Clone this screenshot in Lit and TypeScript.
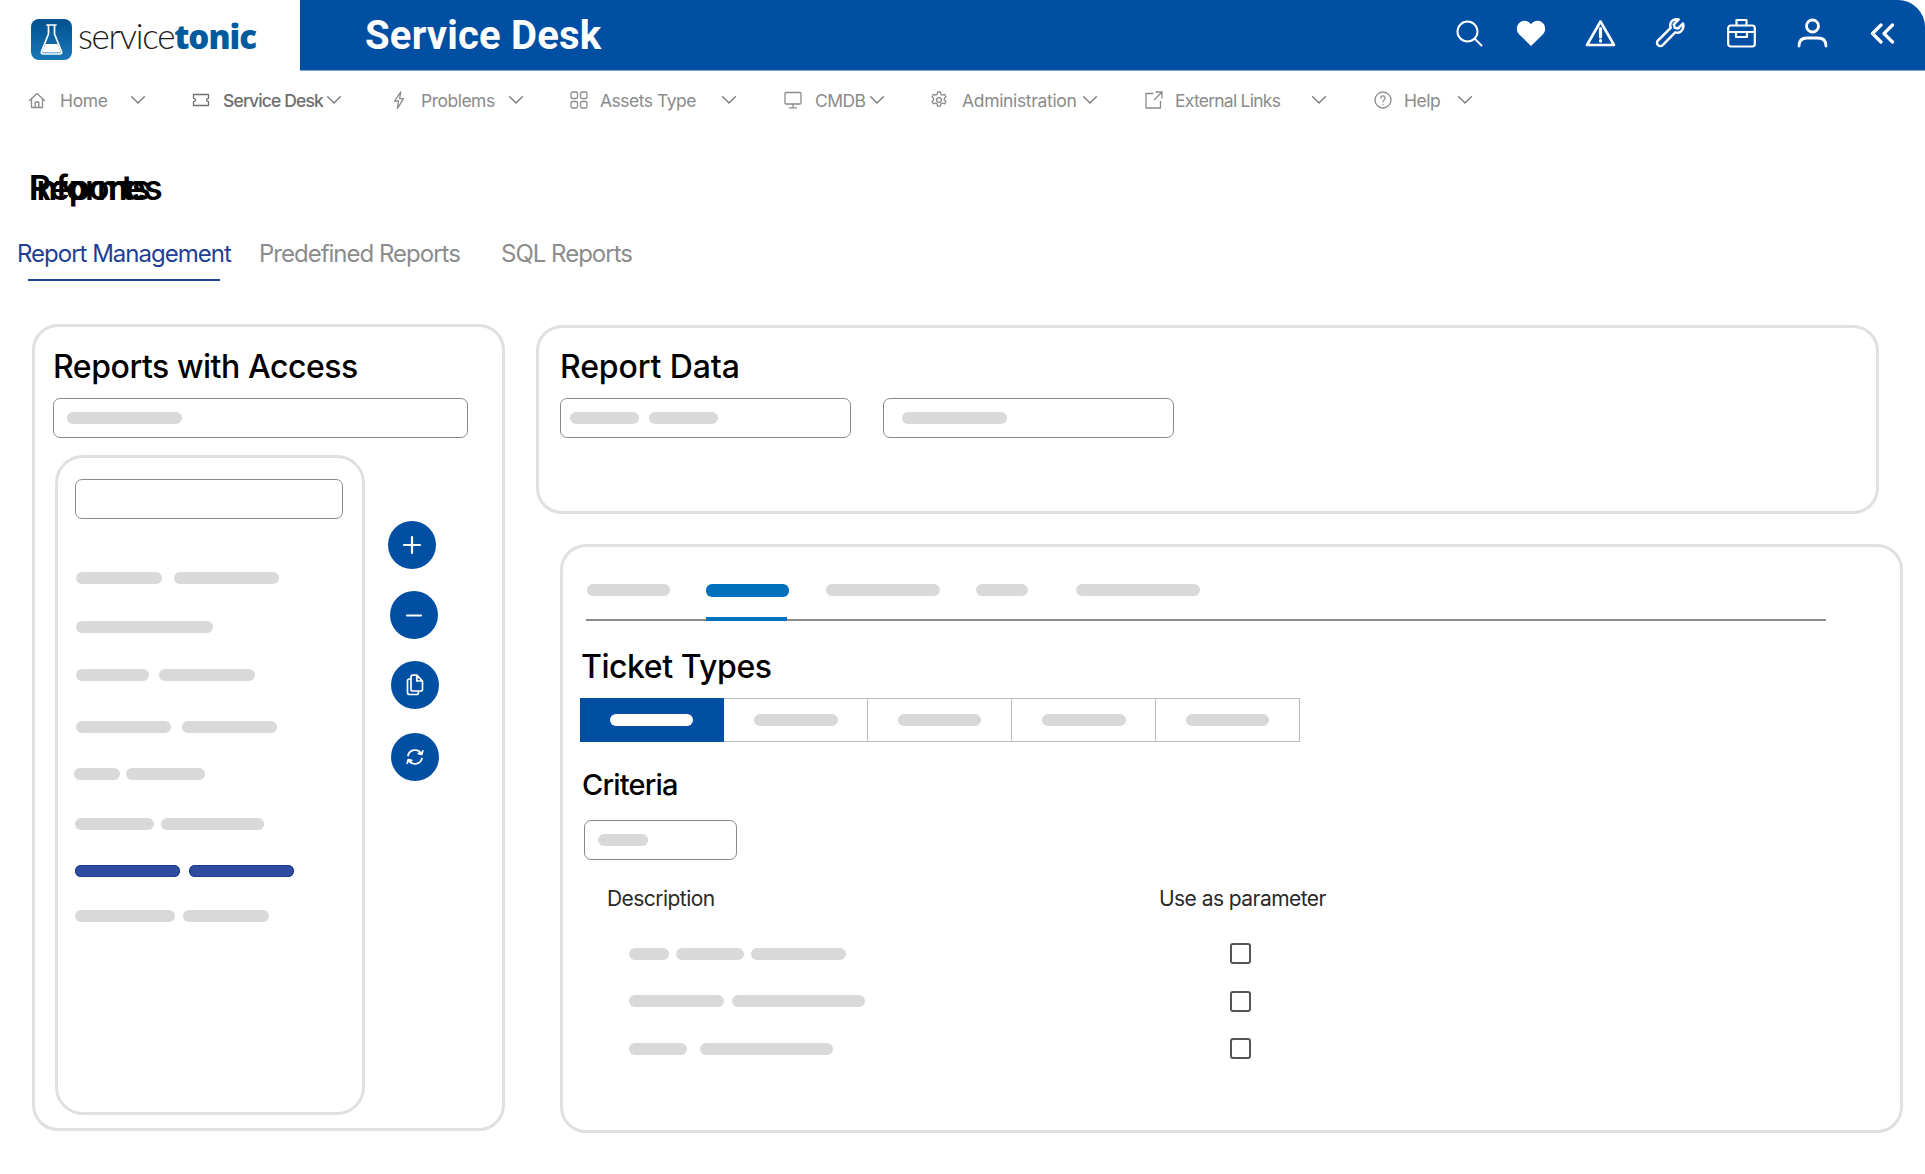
import { LitElement, html, css, svg } from "lit";
import { customElement } from "lit/decorators.js";

const ic = (w: number, h: number, vb: string, body: unknown, cls = "") =>
  html`<svg class=${cls} width=${w} height=${h} viewBox=${vb} fill="none" stroke="currentColor" stroke-linecap="round" stroke-linejoin="round">${body}</svg>`;

// left = space before the item, iw = icon width, gap = icon to label, box = label column width, ls = tracking of that label
const NAV = [
  { label: "Home", left: 28, gap: 14, box: 71, iw: 18, ls: -0.35, icon: svg`<path d="M1.500 9.500 9 2.500l7.500 7M3.500 8v8.500h11V8M7.200 16.500v-5.500h3.600v5.500"/>` },
  { label: "Service Desk", left: 47, gap: 13, box: 104, iw: 18, ls: -0.85, strong: true, icon: svg`<path d="M1.500 3.500h15v3.800c-1.300.3-2 .9-2 1.700s.7 1.400 2 1.700v3.800h-15v-3.800c1.300-.3 2-.9 2-1.700s-.7-1.400-2-1.700z"/>` },
  { label: "Problems", left: 52, gap: 16, box: 88, iw: 12, ls: -0.5, icon: svg`<path d="M7.800.8 1.500 10h4L4.500 17.500 10.500 7.600H6.600z"/>` },
  { label: "Assets Type", left: 47, gap: 12, box: 122, iw: 18, ls: -0.5, icon: svg`<rect x="1" y="1" width="6.500" height="6.500" rx="1.500"/><rect x="10.500" y="1" width="6.500" height="6.500" rx="1.500"/><rect x="1" y="10.500" width="6.500" height="6.500" rx="1.500"/><rect x="10.500" y="10.500" width="6.500" height="6.500" rx="1.500"/>` },
  { label: "CMDB", left: 48, gap: 13, box: 55, iw: 18, ls: -0.6, icon: svg`<rect x="1" y="1.500" width="16" height="11.500" rx="1"/><path d="M9 13v3.500M5.500 16.800h7"/>` },
  { label: "Administration", left: 46, gap: 14, box: 121, iw: 18, ls: -0.33, icon: svg`<circle cx="9" cy="9" r="2.400"/><path d="m7.600 1 2.800 0 .5 2.400 1.500.8 2.200-.9 1.400 2.500-1.700 1.500v1.600l1.700 1.500-1.400 2.500-2.200-.9-1.500.8-.5 2.400H7.600l-.5-2.400-1.500-.8-2.200.9-1.400-2.500 1.700-1.500V7.300L2 5.800l1.400-2.500 2.200.9 1.500-.8z"/>` },
  { label: "External Links", left: 47, gap: 12, box: 137, iw: 19, ls: -0.75, icon: svg`<path d="M9 2.500H2v14.500h14.500V10.500M12 1h6v6M18 1l-7.500 7.500"/>` },
  { label: "Help", left: 48, gap: 12, box: 54, iw: 18, ls: -0.5, icon: svg`<circle cx="9" cy="9" r="8"/><path d="M6.800 7a2.200 2.200 0 1 1 3.300 2c-.8.500-1.100.9-1.100 1.800"/><path d="M9 13.400v.1"/>` },
];

const LIST: { top: number; x: number; bars: number[]; gap: number; active?: boolean }[] = [
  { top: 53, x: 1, bars: [86, 105], gap: 12 },
  { top: 37, x: 1, bars: [137], gap: 0 },
  { top: 36, x: 1, bars: [73, 96], gap: 10 },
  { top: 40, x: 1, bars: [95, 95], gap: 11 },
  { top: 35, x: -1, bars: [46, 79], gap: 6 },
  { top: 38, x: 0, bars: [79, 103], gap: 7 },
  { top: 35, x: 0, bars: [105, 105], gap: 9, active: true },
  { top: 33, x: 0, bars: [100, 86], gap: 8 },
];

const ROWS: { bars: number[]; gap: number }[] = [
  { bars: [40, 68, 95], gap: 7 },
  { bars: [95, 133], gap: 8 },
  { bars: [58, 133], gap: 13 },
];

const TABS = [
  { w: 83, gap: 36 },
  { w: 83, gap: 37, active: true },
  { w: 114, gap: 36 },
  { w: 52, gap: 48 },
  { w: 124, gap: 0 },
];

const SEGS = [83, 84, 83, 84, 83];

const BTNS = [
  { top: 66, x: 0, icon: ic(20, 20, "0 0 20 20", svg`<path d="M10 2v16M2 10h16" stroke-width="2.200"/>`) },
  { top: 22, x: 2, icon: ic(20, 20, "0 0 20 20", svg`<path d="M3 10.500h14" stroke-width="2.200"/>`) },
  { top: 22, x: 3, icon: ic(18, 22, "0 0 18 22", svg`<path d="M5 5H3.500C2.400 5 1.500 5.900 1.500 7v11.500c0 1.100.9 2 2 2h7c1.100 0 2-.9 2-2V17M5 15.500V3c0-1 .8-1.800 1.800-1.800h4L16.500 7v8.500c0 1-.8 1.500-1.800 1.500H6.800C5.800 17 5 16.500 5 15.500zM10.800 1.200V7h5.700" stroke-width="1.700"/>`) },
  { top: 24, x: 3, icon: ic(20, 20, "0 0 20 20", svg`<path d="M3 8.500A7.300 7.300 0 0 1 16.500 7M17.800 3.800 16.800 7.300 13.300 6.500M17 11.500A7.300 7.300 0 0 1 3.500 13M2.200 16.200 3.200 12.700 6.700 13.500" stroke-width="1.800"/>`) },
];

@customElement("app-root")
export class AppRoot extends LitElement {
  static styles = css`
    :host {
      display: block;
      width: 1925px;
      height: 1174px;
      overflow: hidden;
      background: #fff;
      font-family: Inter, "Liberation Sans", sans-serif;
      color: #000;
    }
    * { box-sizing: border-box; }

    /* header */
    .top { display: flex; height: 71px; }
    .logo { width: 300px; display: flex; align-items: center; padding: 8px 0 0 31px; }
    .mark { width: 41px; height: 41px; flex: none; }
    .word { margin-left: 6px; line-height: 41px; white-space: nowrap; }
    .word .a { font: 300 35px/41px Lato, sans-serif; letter-spacing: -1.3px; color: #1c1c1c; }
    .word .b { font: 800 33px/41px "Open Sans", sans-serif; letter-spacing: -1px; color: #005a9e; }
    .bar {
      flex: 1; height: 71px; background: #004fa3; border-bottom: 1px solid #7ea3d4;
      border-top-right-radius: 27px; display: flex; align-items: center; color: #fff; padding-left: 65px;
    }
    .bar h1 { margin: 0; padding-top: 1px; font: 700 40px/69px Roboto, sans-serif; letter-spacing: 0.2px; flex: 1; }
    .hicons { display: flex; align-items: center; height: 68px; margin-bottom: 4px; padding-right: 30px; }
    .hicons svg { display: block; flex: none; }
    .sp33 { width: 33.500px; } .sp39 { width: 39px; } .sp41 { width: 41px; } .sp42 { width: 42px; }

    /* nav */
    .nav { display: flex; align-items: center; height: 60px; padding-bottom: 2px; color: #8b8b8b; font-size: 17.5px; }
    .nav .item { display: flex; align-items: center; white-space: nowrap; }
    .nav .item.strong { color: #6e6e6e; font-weight: 500; }
    .nav svg { display: block; flex: none; stroke-width: 1.3; }
    .nav .chev { color: #777; }

    /* title */
    .title { position: relative; height: 42px; margin: 36px 0 0 29px; font: 600 34px/42px Inter, sans-serif; }
    .title span { position: absolute; left: 0; top: 0; white-space: nowrap; }
    .title .one { letter-spacing: -1.1px; }
    .title .two { letter-spacing: -1.85px; }

    /* page tabs */
    .ptabs { display: flex; margin-top: 27px; height: 89px; padding-left: 17px; font-size: 24px; letter-spacing: -1px; color: #8c8c8c; }
    .ptabs a { display: block; height: 45px; line-height: 36px; position: relative; white-space: nowrap; }
    .ptabs a.on { color: #1f3f95; width: 214px; margin-right: 28px; }
    .ptabs a.on::after { content: ""; position: absolute; left: 11px; width: 192px; top: 43px; height: 2px; background: #1f3f95; }
    .ptabs a.mid { width: 242px; }

    /* body */
    .main { display: flex; padding-left: 32px; }
    .card { border: 3px solid #e0e0e0; border-radius: 26px; background: #fff; flex: none; }
    .left { width: 473px; height: 807px; margin-top: -1px; padding: 0 0 0 18px; }
    .right { margin-left: 31px; flex: none; }
    .rd { width: 1343px; height: 189px; padding: 0 0 0 21px; }
    .rest { width: 1343px; height: 589px; margin: 30px 0 0 24px; padding: 0 0 0 22px; position: relative; }

    h2 { margin: 0; font: 500 32px/40px Inter, sans-serif; letter-spacing: -0.45px; white-space: nowrap; }
    .card > h2 { padding-top: 20px; height: 71px; }
    .rd > h2 { padding-top: 19px; height: 70px; letter-spacing: -0.12px; }

    .field { height: 40px; border: 1.5px solid #8a8a8a; border-radius: 7px; display: flex; align-items: center; gap: 10px; background: #fff; flex: none; }
    .pill { height: 12px; border-radius: 6px; background: #d9d9d9; flex: none; display: block; }

    .f1 { width: 415px; padding-left: 13px; }
    .split { display: flex; margin-top: 17px; }
    .inner { width: 310px; height: 660px; margin-left: 2px; border-radius: 28px; padding: 21px 0 0 17px; }
    .f2 { width: 268px; }
    .row { display: flex; }
    .row .pill.blue { background: #2f4c9e; box-shadow: inset 0 0 0 1px #1c3b90; }

    .btns { display: flex; flex-direction: column; margin-left: 23px; }
    .btn { width: 48px; height: 48px; border-radius: 50%; background: #004fa3; color: #fff; display: flex; align-items: center; justify-content: center; }
    .btn svg { display: block; }

    .rdf { display: flex; gap: 32px; }
    .rdf .field { width: 291px; padding-left: 9px; }
    .rdf .field + .field { padding-left: 18px; }

    .tabs { display: flex; align-items: center; height: 74px; margin: 0 74px 0 1px; border-bottom: 2px solid #8c8c8c; padding: 14px 0 0 1px; position: relative; }
    .tabs .pill.on { background: #0070bc; height: 13px; }
    .tabs .mark2 { position: absolute; bottom: -2px; left: 120px; width: 81px; height: 4px; background: #0070bc; }

    .rest > h2 { height: auto; padding: 0; margin: 26px 0 0 -4px; }
    .segs { display: flex; margin: 11px 0 0 -5px; width: 720px; height: 44px; }
    .seg { width: 144px; height: 44px; border: 1.5px solid #bdbdbd; border-left: 0; display: flex; align-items: center; justify-content: center; }
    .seg.on { background: #004fa3; border-color: #004fa3; }
    .seg.on .pill { background: #fff; }
    h3 { margin: 26px 0 0 -3px; font: 500 29px/34px Inter, sans-serif; letter-spacing: -0.8px; }
    .f3 { width: 153px; margin: 18px 0 0 -1px; padding-left: 13px; }

    .thead { display: flex; height: 36px; margin: 21px 0 13px; font-size: 21px; line-height: 36px; letter-spacing: -0.55px; color: #2a2a2a; }
    .thead .d { width: 574px; padding-left: 22px; }
    .trow { display: flex; align-items: center; height: 47.5px; }
    .trow .c { width: 645px; padding-left: 44px; display: flex; flex: none; }
    .check { width: 21px; height: 21px; border: 2px solid #555; border-radius: 3px; background: #fff; }
  `;

  private bars(bars: number[], gap: number, blue = false) {
    return bars.map(
      (w, i) => html`<span class="pill ${blue ? "blue" : ""}" style="width:${w}px;margin-left:${i ? gap : 0}px"></span>`
    );
  }

  private header() {
    return html`<div class="top">
      <div class="logo">
        <svg class="mark" viewBox="0 0 41 41">
          <defs><linearGradient id="lg" x1="0" y1="0" x2="0" y2="1"><stop offset="0" stop-color="#00508f"/><stop offset="1" stop-color="#1a78b8"/></linearGradient></defs>
          <rect width="41" height="41" rx="8" fill="url(#lg)"/>
          <path d="M16 6h9M17.500 6v9L10.500 32.500c-.6 1.500.2 2.500 1.700 2.500h16.600c1.500 0 2.300-1 1.700-2.500L23.500 15V6" fill="none" stroke="#fff" stroke-width="1.700" stroke-linejoin="round" stroke-linecap="round"/>
          <path d="M14.500 25h12L30 33.500H11z" fill="#fff"/>
        </svg>
        <div class="word"><span class="a">service</span><span class="b">tonic</span></div>
      </div>
      <div class="bar">
        <h1>Service Desk</h1>
        <div class="hicons">
          ${ic(27, 27, "0 0 27 27", svg`<circle cx="11.500" cy="11.500" r="10" stroke-width="2"/><path d="m19 19 6.500 6.500" stroke-width="2"/>`)}
          <span class="sp33"></span>
          ${ic(30, 28, "0 0 30 28", svg`<path d="M15 27 2.800 15C-.2 11.800.3 6.200 3.800 3.500 7.500.7 12.300 1.500 15 5.300 17.700 1.500 22.500.7 26.200 3.500c3.500 2.700 4 8.300 1 11.500z" fill="currentColor" stroke="none"/>`)}
          <span class="sp39"></span>
          ${ic(31, 28, "0 0 31 28", svg`<path d="M15.500 2.500 2 26h27z" stroke-width="2.600"/><path d="M15.500 9.500v8.500M15.500 21.500v.6" stroke-width="3.200"/>`)}
          <span class="sp39"></span>
          ${ic(31, 30, "0 0 31 30", svg`<path d="M28 5.500 23 10.500l-3.300-.8-.9-3.400L23.600 1.500C19.800.3 15.500 2.800 15.200 7c0 1 .2 2 .5 2.800L3 22.500c-1.300 1.300-1.300 3.300 0 4.600 1.300 1.300 3.400 1.300 4.700 0L20.200 14.400c4.800 1.600 9.500-2.700 7.800-8.900z" stroke-width="2.500"/>`)}
          <span class="sp41"></span>
          ${ic(29, 30, "0 0 29 30", svg`<rect x="1.200" y="7.500" width="26.600" height="21" rx="2.500" stroke-width="2.200"/><path d="M9.500 7.500V2h10v5.500M1.200 14h26.600M9 14v5h11v-5" stroke-width="2.200"/>`)}
          <span class="sp41"></span>
          ${ic(31, 30, "0 0 31 30", svg`<circle cx="15.500" cy="8" r="6" stroke-width="2.800"/><path d="M2 28c0-5.500 3-8 8-8h11c5 0 8 2.500 8 8" stroke-width="2.800"/>`)}
          <span class="sp42"></span>
          ${ic(25, 21, "0 0 25 21", svg`<path d="M11 2 2.500 10.500 11 19M22.500 2 14 10.500 22.500 19" stroke-width="3.200"/>`)}
        </div>
      </div>
    </div>`;
  }

  private navBar() {
    return html`<div class="nav">
      ${NAV.map(
        (n) => html`<div class="item ${n.strong ? "strong" : ""}" style="margin-left:${n.left}px">
          ${ic(n.iw, 18, `0 0 ${n.iw} 18`, n.icon)}
          <span style="margin-left:${n.gap}px;width:${n.box}px;letter-spacing:${n.ls}px">${n.label}</span>
          <span class="chev">
            ${ic(14, 8, "0 0 14 8", svg`<path d="M.7.7 7 7l6.300-6.300" stroke-width="1.300"/>`)}
          </span>
        </div>`
      )}
    </div>`;
  }

  render() {
    return html`
      ${this.header()}
      ${this.navBar()}
      <div class="title"><span class="one">Reports</span><span class="two">Informes</span></div>
      <div class="ptabs">
        <a class="on">Report Management</a><a class="mid">Predefined Reports</a><a>SQL Reports</a>
      </div>
      <div class="main">
        <section class="card left">
          <h2>Reports with Access</h2>
          <div class="field f1"><span class="pill" style="width:115px"></span></div>
          <div class="split">
            <div class="card inner">
              <div class="field f2"></div>
              ${LIST.map(
                (r) => html`<div class="row" style="margin-top:${r.top}px;margin-left:${r.x}px">${this.bars(r.bars, r.gap, r.active)}</div>`
              )}
            </div>
            <div class="btns">
              ${BTNS.map((b) => html`<div class="btn" style="margin-top:${b.top}px;margin-left:${b.x}px">${b.icon}</div>`)}
            </div>
          </div>
        </section>
        <div class="right">
          <section class="card rd">
            <h2>Report Data</h2>
            <div class="rdf">
              <div class="field"><span class="pill" style="width:69px"></span><span class="pill" style="width:69px"></span></div>
              <div class="field"><span class="pill" style="width:105px"></span></div>
            </div>
          </section>
          <section class="card rest">
            <div class="tabs">
              ${TABS.map(
                (t) => html`<span class="pill ${t.active ? "on" : ""}" style="width:${t.w}px;margin-right:${t.gap}px"></span>`
              )}
              <span class="mark2"></span>
            </div>
            <h2>Ticket Types</h2>
            <div class="segs">
              ${SEGS.map(
                (w, i) => html`<div class="seg ${i === 0 ? "on" : ""}"><span class="pill" style="width:${w}px"></span></div>`
              )}
            </div>
            <h3>Criteria</h3>
            <div class="field f3"><span class="pill" style="width:50px"></span></div>
            <div class="thead"><div class="d">Description</div><div>Use as parameter</div></div>
            ${ROWS.map(
              (r) => html`<div class="trow">
                <div class="c">${this.bars(r.bars, r.gap)}</div>
                <div class="check"></div>
              </div>`
            )}
          </section>
        </div>
      </div>
    `;
  }
}
